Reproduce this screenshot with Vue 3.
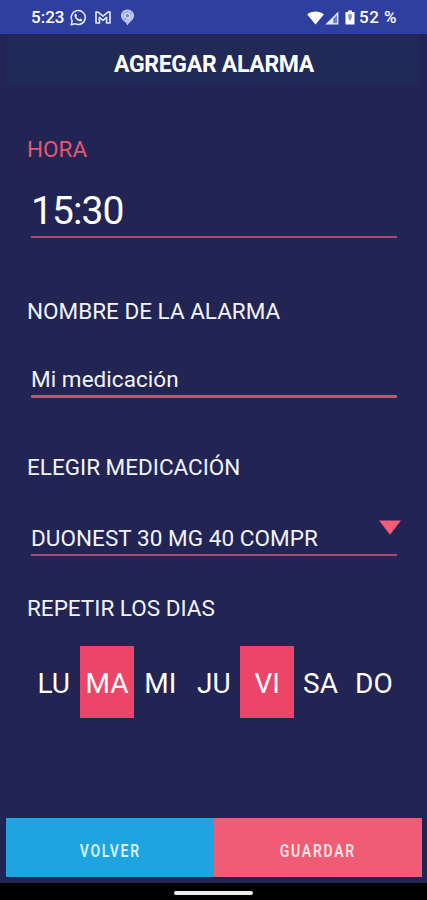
<script setup>
import { ref } from 'vue';

const hora = ref('15:30');
const nombre = ref('Mi medicación');
const medicacion = ref('DUONEST 30 MG 40 COMPR');

const dias = ref([
    { id: 'LU', activo: false },
    { id: 'MA', activo: true },
    { id: 'MI', activo: false },
    { id: 'JU', activo: false },
    { id: 'VI', activo: true },
    { id: 'SA', activo: false },
    { id: 'DO', activo: false },
]);

const toggleDia = (dia) => {
    dia.activo = !dia.activo;
};
</script>

<template>
    <div class="screen">
        <div class="status-bar">
            <span class="clock">5:23</span>
            <svg class="icon-whatsapp" width="17" height="17" viewBox="0 0 17 17" fill="none">
                <path d="M1.2 15.8 2.2 12A7 7 0 1 1 5 14.7Z" stroke="#e6ebff" stroke-width="1.5" stroke-linejoin="round" />
                <path d="M5.9 4.5 7.1 6.6 6.4 7.6C7 8.9 7.9 9.8 9.3 10.4L10.3 9.6 12.3 10.7C12 12.2 10.8 12.7 9.5 12.3 7 11.6 5.1 9.7 4.5 7.3 4.2 6 4.7 4.8 5.9 4.5Z" fill="#e6ebff" />
            </svg>
            <svg class="icon-mail" width="16" height="13" viewBox="0 0 16 13" fill="none">
                <path d="M1 12V1.2H3L8 5.2 13 1.2H15V12H11.6V6.4L8 9.3 4.4 6.4V12Z" stroke="#dfe5ff" stroke-width="1.7" stroke-linejoin="round" />
            </svg>
            <svg class="icon-pin" width="15" height="17" viewBox="0 0 15 17">
                <path d="M7.5.6C3.6.6.9 3.3.9 6.8c0 3.1 2.4 4.8 4.4 6.5.9.8 1.4 2.3 2.2 3.3.8-1 1.3-2.5 2.2-3.3 2-1.7 4.4-3.4 4.4-6.5C14.1 3.3 11.4.6 7.5.6Z" fill="#b9c3ec" />
                <path d="M3 3.4 5.6 5.6M12 3.3 3.8 11.2M8.8 1.4 6 4" stroke="#8290d2" stroke-width="0.9" />
                <circle cx="7.5" cy="6.7" r="2.2" fill="#7483cc" stroke="#e5e9ff" />
            </svg>
            <div class="status-right">
                <svg class="icon-wifi" width="17" height="14" viewBox="0 0 17 14">
                    <path d="M8.5 13.6.2 3.4C4.9-.4 12.1-.4 16.8 3.4Z" fill="#fff" />
                </svg>
                <svg class="icon-signal" width="14" height="14" viewBox="0 0 14 14">
                    <path d="M.4 13.6H13.4V.4Z" fill="#e9ecfb" />
                    <path d="M8.2 7.8 12 4V12.3H8.2Z" fill="#6f7dc8" />
                </svg>
                <svg class="icon-battery" width="10" height="15" viewBox="0 0 10 15">
                    <path d="M3 .4H7V2H9.5V14.6H.5V2H3Z" fill="#fff" />
                    <path d="M3.2 4.2H6.8V7.3L5 11.4 3.2 7.3Z" fill="#8590ce" />
                </svg>
                <span class="percent">52 %</span>
            </div>
        </div>

        <header class="title-bar">
            <h1>AGREGAR ALARMA</h1>
        </header>

        <main class="form">
            <section class="group group-time">
                <h2 class="label label-time">HORA</h2>
                <div class="field field-time">{{ hora }}</div>
            </section>

            <section class="group group-name">
                <h2 class="label">NOMBRE DE LA ALARMA</h2>
                <div class="field field-name">{{ nombre }}</div>
            </section>

            <section class="group group-drug">
                <h2 class="label">ELEGIR MEDICACIÓN</h2>
                <div class="field field-drug">
                    <span>{{ medicacion }}</span>
                    <svg class="arrow" width="22" height="15" viewBox="0 0 22 15">
                        <path d="M0 .5H22L11 14.7Z" fill="#f25c75" />
                    </svg>
                </div>
            </section>

            <section class="group group-days">
                <h2 class="label">REPETIR LOS DIAS</h2>
                <div class="days">
                    <button
                        v-for="dia in dias"
                        :key="dia.id"
                        class="day"
                        :class="{ active: dia.activo }"
                        type="button"
                        @click="toggleDia(dia)"
                    >
                        {{ dia.id }}
                    </button>
                </div>
            </section>
        </main>

        <footer class="actions">
            <button class="action back" type="button"><span>VOLVER</span></button>
            <button class="action save" type="button"><span>GUARDAR</span></button>
        </footer>

        <div class="nav-bar">
            <div class="nav-pill"></div>
        </div>
    </div>
</template>

<style>
body {
    margin: 0;
    background: #222454;
}
</style>

<style scoped>
.screen {
    display: flex;
    flex-direction: column;
    width: 427px;
    height: 900px;
    overflow: hidden;
    background: #222454;
    color: #f2f4fb;
    font-family: Roboto, "Liberation Sans", sans-serif;
}

button {
    border: 0;
    padding: 0;
    margin: 0;
    background: none;
    color: inherit;
    font-family: inherit;
}

.status-bar {
    display: flex;
    align-items: center;
    flex: 0 0 34px;
    box-sizing: border-box;
    padding: 1px 28px 0 31px;
    background: #2f3f9f;
    color: #fff;
    font-size: 17px;
    font-weight: 500;
}

.clock {
    width: 39px;
    padding-bottom: 1px;
    white-space: nowrap;
}

.icon-mail {
    margin-left: 8px;
}

.icon-pin {
    margin-left: 9px;
}

.status-right {
    display: flex;
    align-items: center;
    margin-left: auto;
}

.icon-signal {
    margin-left: 1px;
}

.icon-battery {
    margin-left: 6px;
}

.percent {
    width: 40px;
    margin-left: 4px;
    padding-bottom: 2px;
    letter-spacing: 0.5px;
    white-space: nowrap;
}

.title-bar {
    display: flex;
    align-items: center;
    justify-content: center;
    flex: 0 0 50px;
    margin: 2px 7px 0;
    background: #212a56;
}

h1 {
    margin: 7px 0 0 1px;
    color: #fff;
    font-size: 23px;
    font-weight: 700;
    letter-spacing: -0.3px;
    line-height: 28px;
}

.form {
    flex: 1;
    padding: 51px 26px 0 27px;
}

.label {
    margin: 0;
    font-size: 22.5px;
    font-weight: 400;
    line-height: 24px;
    white-space: nowrap;
}

.label-time {
    color: #e4576f;
}

.field {
    box-sizing: border-box;
    width: 366px;
    margin-left: 4px;
    border-bottom: 2px solid #a84b6e;
    font-size: 22.5px;
    letter-spacing: 0.05px;
    white-space: nowrap;
}

.field-time {
    height: 48px;
    margin-top: 29px;
    color: #fff;
    font-size: 39px;
    letter-spacing: -0.9px;
    line-height: 42px;
}

.group-name {
    margin-top: 61px;
}

.field-name {
    height: 31px;
    margin-top: 44px;
    border-bottom: 3px solid #cb4f70;
    border-radius: 1px;
    line-height: 24px;
}

.group-drug {
    margin-top: 57px;
}

.field-drug {
    display: flex;
    justify-content: space-between;
    height: 36px;
    margin-top: 41px;
}

.field-drug span {
    margin-top: 6px;
    line-height: 24px;
}

.arrow {
    flex: none;
    margin-right: -4px;
}

.group-days {
    margin-top: 40px;
}

.days {
    display: flex;
    width: 373.5px;
    height: 72px;
    margin-top: 26px;
}

.day {
    flex: 1;
    padding-top: 2px;
    color: #fff;
    font-size: 28px;
}

.day.active {
    background: #eb4668;
}

.actions {
    display: flex;
    flex: 0 0 59px;
    margin: 0 5px 6px 6px;
}

.action {
    flex: 1;
    padding-top: 6px;
    font-size: 18px;
    font-weight: 600;
    letter-spacing: 2.2px;
}

.action span {
    display: inline-block;
    transform: scaleX(0.78);
}

.back {
    background: #1ea4e1;
    color: #d8f2ff;
}

.save {
    background: #ef5c73;
    color: #ffe2e6;
}

.nav-bar {
    display: flex;
    justify-content: center;
    flex: 0 0 17px;
    background: #000;
}

.nav-pill {
    width: 79px;
    height: 4px;
    margin-top: 7.5px;
    border-radius: 2px;
    background: #ededed;
}
</style>
